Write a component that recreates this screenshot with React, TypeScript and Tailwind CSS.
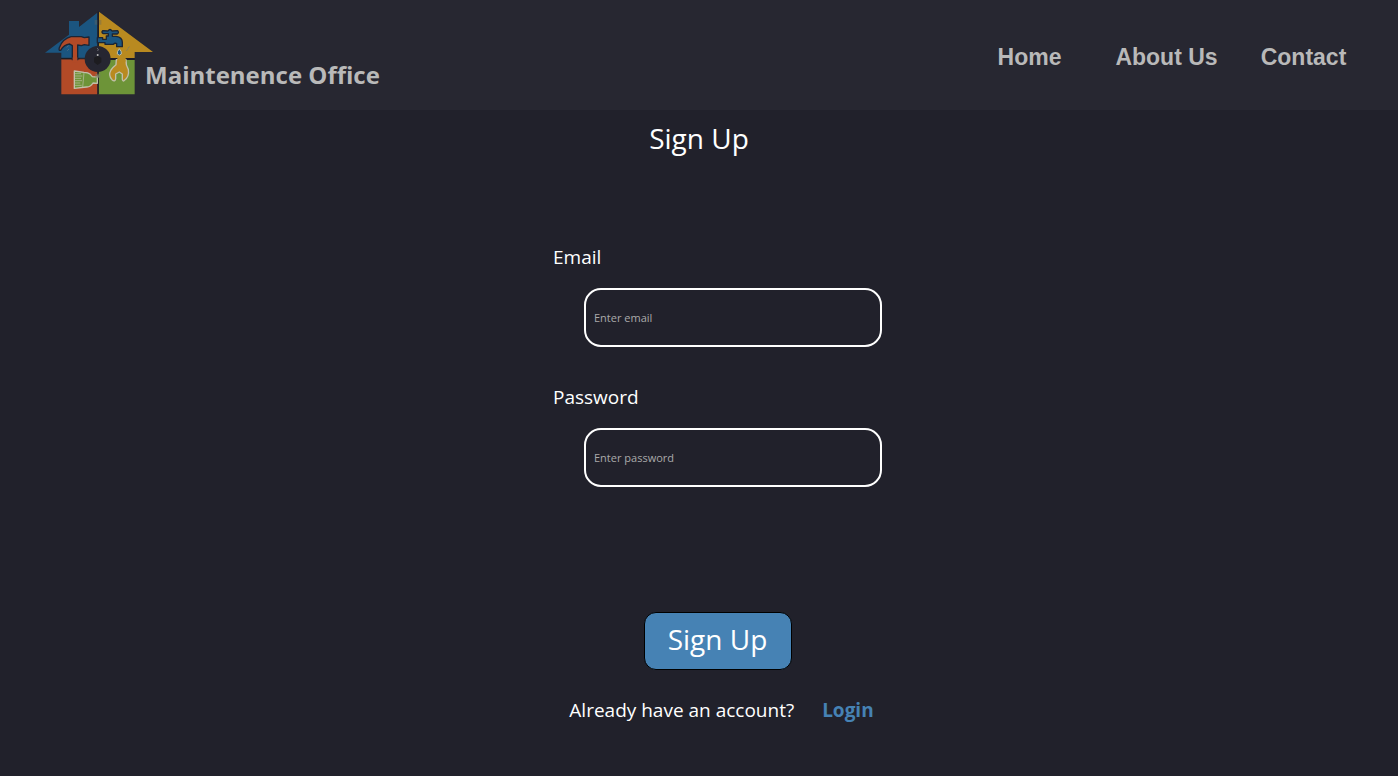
import React from "react";

function Logo() {
  return (
    <svg viewBox="15 18 324 252" className="h-[84px] w-[108px] shrink-0" aria-hidden="true">
      <path d="M15 143 L87 89 V48 H117 V66 L172 23 V158 H64 V143 Z" fill="#1b5580" />
      <path d="M177 20 L339 141 H284 V159 H177 Z" fill="#b98a20" />
      <path d="M64 163 H172 V268 H64 Z" fill="#b24a27" />
      <path d="M175 165 H284 V268 H175 Z" fill="#6d9438" />
      <path d="M174.500 20 V268 M64 161 H118 M210 162 H284" stroke="#1c1c24" strokeWidth="4" />
      <path d="M172 98 H188 V103 H199 V93 H205 V86 H190 Q183 82 188 77 L204 78 Q210 69 216 78 L233 77 Q238 83 232 87 H217 V94 H228 Q247 96 247 112 V125 H230 V116 Q225 113 220 118 H195 V113 H172 Z" fill="#1b5580" stroke="#1c2534" strokeWidth="4" strokeLinejoin="round" />
      <path d="M97 164 V122 L89 117 Q72 119 62 136 Q55 137 58 128 Q68 101 93 95 H124 L133 98 L147 96 V121 L133 119 L124 122 L113 120 V164 Z" fill="#b24a27" stroke="#1c2534" strokeWidth="4" strokeLinejoin="round" />
      <path d="M98 157 H112 V172 H98 Z" fill="#b24a27" />
      <path d="M80 127 L86 122 M82 137 L87 132 M263 130 L269 125 M259 137 L265 132" stroke="#69777c" strokeWidth="2" />
      <path d="M229 164 H258 Q257 180 265 193 Q269 216 251 228 Q246 228 247 216 V207 L238 201 L227 207 V221 Q225 233 216 224 Q204 211 213 195 Q220 185 228 179 Z" fill="#b98a20" stroke="#c2c0aa" strokeWidth="4" strokeLinejoin="round" />
      <path d="M232 151 H257 V170 H232 Z" fill="#b98a20" />
      <path d="M238 131 Q230 141 232 147 Q238 154 244 147 Q246 141 238 131 Z" fill="#1b5580" stroke="#c2c0aa" strokeWidth="3" />
      <path d="M103 198 L132 202 Q144 202 151 208 L157 215 L172 216 V235 L159 234 Q151 247 139 246 L103 250 Z" fill="#6d9438" stroke="#c2c0aa" strokeWidth="4" strokeLinejoin="round" />
      <path d="M132 203 L128 247 M104 206 H123 M104 213 H127 M104 220 H123 M104 227 H126 M104 234 H121 M104 241 H125" stroke="#c2c0aa" strokeWidth="2" />
      <circle cx="173" cy="162" r="39" fill="#262631" />
      <path d="M171 129 Q178 132 173 138" fill="none" stroke="#8b8b91" strokeWidth="2" />
      <circle cx="173" cy="150" r="3" fill="#b9b9b9" />
      <path d="M173 153 L184 158 V172 L173 180 L162 172 V158 Z" fill="#1d1c20" />
      <path d="M166 206 H181 V219 H166 Z" fill="#777f63" opacity=".55" />
      <path d="M170 209 L177 216 M177 209 L170 216" stroke="#a5a48b" strokeWidth="1" />
      <path d="M164 45 H172 V59 H164 Z M177 45 H184 V59 H177 Z" fill="#67675b" opacity=".4" />
    </svg>
  );
}

type FieldProps = { id: string; label: string; type: string; placeholder: string };

function Field({ id, label, type, placeholder }: FieldProps) {
  return (
    <div className="flex flex-col gap-[15px]">
      <label htmlFor={id} className="text-[19px] leading-8">
        {label}
      </label>
      <input
        id={id}
        type={type}
        placeholder={placeholder}
        className="ml-[31px] h-[59px] rounded-[17px] border-2 border-white bg-transparent px-2 text-[11px] text-white outline-none placeholder:text-[#aaaaaa]"
      />
    </div>
  );
}

export default function App() {
  return (
    <div className="min-h-screen bg-[#21212b] font-['Open_Sans','Noto_Sans',sans-serif] text-white">
      <header className="flex min-h-[110px] items-center justify-between bg-[#272731] pr-[26px] pl-[45px] text-[#b9b9b9]">
        <a href="#" className="flex items-end pb-1">
          <Logo />
          <span className="-ml-2 pb-1 text-2xl font-bold">Maintenence Office</span>
        </a>
        <nav className="grid w-[411px] grid-cols-3 pt-1 text-center font-['Liberation_Sans',sans-serif] text-[23px] leading-8 font-bold">
          <a href="#home">Home</a>
          <a href="#about">About Us</a>
          <a href="#contact">Contact</a>
        </nav>
      </header>
      <main className="flex flex-col items-center pt-2">
        <h1 className="text-[28px] leading-10">Sign Up</h1>
        <form className="flex w-full max-w-[366px] flex-col pt-[83px] pl-[37px]" onSubmit={(e) => e.preventDefault()}>
          <div className="flex flex-col gap-[34px]">
            <Field id="email" label="Email" type="email" placeholder="Enter email" />
            <Field id="password" label="Password" type="password" placeholder="Enter password" />
          </div>
          <button
            type="submit"
            className="mt-[125px] h-[58px] w-[148px] self-center rounded-xl border border-black bg-[#4682b4] pb-1 text-[28px] leading-none"
          >
            Sign Up
          </button>
          <p className="mt-6 flex justify-center gap-7 pl-2 text-[19px] leading-8 whitespace-nowrap">
            Already have an account?
            <a href="#login" className="font-bold text-[#4682b4]">
              Login
            </a>
          </p>
        </form>
      </main>
    </div>
  );
}
